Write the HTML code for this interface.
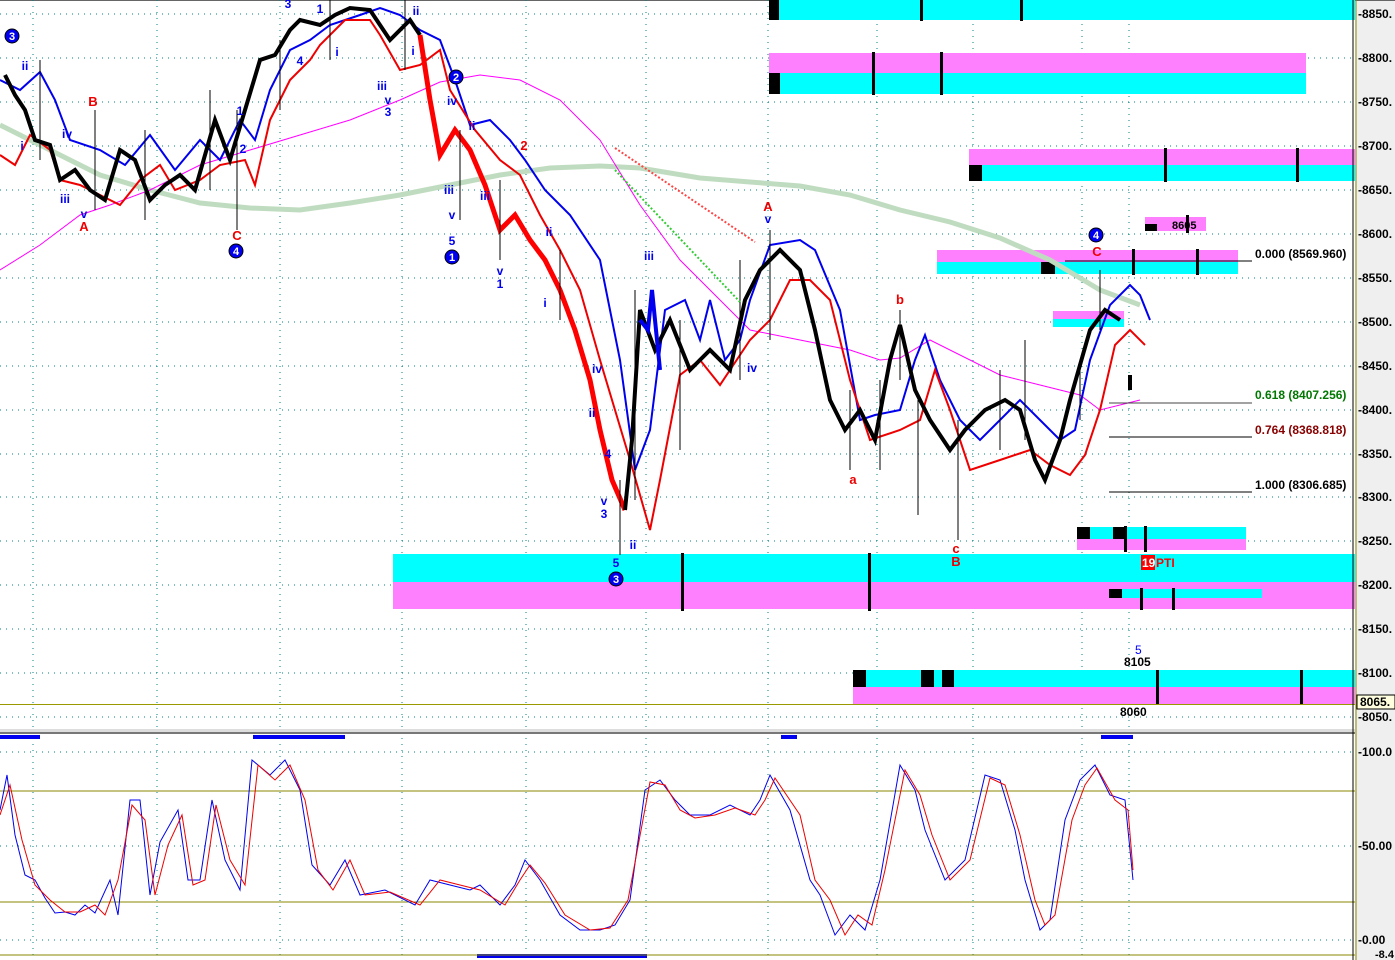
<!DOCTYPE html>
<html><head><meta charset="utf-8"><style>
html,body{margin:0;padding:0;background:#fff;width:1395px;height:960px;overflow:hidden}
svg{display:block;font-family:"Liberation Sans",sans-serif}
</style></head><body>
<svg width="1395" height="960" viewBox="0 0 1395 960" xmlns="http://www.w3.org/2000/svg">
<rect width="1395" height="960" fill="#fff"/>
<rect x="1355" y="0" width="40" height="960" fill="#efefef"/>
<line x1="0" y1="0.5" x2="1395" y2="0.5" stroke="#666"/>
<g stroke="#008080" stroke-width="1" stroke-dasharray="1 5">
<line x1="33" y1="0" x2="33" y2="960"/><line x1="157" y1="0" x2="157" y2="960"/><line x1="280" y1="0" x2="280" y2="960"/><line x1="402" y1="0" x2="402" y2="960"/><line x1="526" y1="0" x2="526" y2="960"/><line x1="646" y1="0" x2="646" y2="960"/><line x1="768" y1="0" x2="768" y2="960"/><line x1="877" y1="0" x2="877" y2="960"/><line x1="973" y1="0" x2="973" y2="960"/><line x1="1082" y1="0" x2="1082" y2="960"/><line x1="1129" y1="0" x2="1129" y2="960"/>
<line x1="0" y1="14" x2="1352" y2="14"/><line x1="0" y1="58" x2="1352" y2="58"/><line x1="0" y1="102" x2="1352" y2="102"/><line x1="0" y1="146" x2="1352" y2="146"/><line x1="0" y1="190" x2="1352" y2="190"/><line x1="0" y1="234" x2="1352" y2="234"/><line x1="0" y1="278" x2="1352" y2="278"/><line x1="0" y1="322" x2="1352" y2="322"/><line x1="0" y1="366" x2="1352" y2="366"/><line x1="0" y1="410" x2="1352" y2="410"/><line x1="0" y1="454" x2="1352" y2="454"/><line x1="0" y1="497" x2="1352" y2="497"/><line x1="0" y1="541" x2="1352" y2="541"/><line x1="0" y1="585" x2="1352" y2="585"/><line x1="0" y1="629" x2="1352" y2="629"/><line x1="0" y1="673" x2="1352" y2="673"/><line x1="0" y1="717" x2="1352" y2="717"/>
<line x1="0" y1="752" x2="1352" y2="752"/><line x1="0" y1="846" x2="1352" y2="846"/><line x1="0" y1="940" x2="1352" y2="940"/>
</g>
<rect x="769" y="0" width="586" height="20" fill="#00ffff"/><rect x="769" y="0" width="10" height="20" fill="#000"/>
<rect x="920" y="0" width="3" height="21" fill="#000"/><rect x="1020" y="0" width="3" height="21" fill="#000"/>
<rect x="769" y="53" width="537" height="20" fill="#ff80ff"/><rect x="769" y="73" width="537" height="21" fill="#00ffff"/><rect x="769" y="73" width="11" height="21" fill="#000"/>
<rect x="872" y="52" width="3" height="43" fill="#000"/><rect x="940" y="52" width="3" height="43" fill="#000"/>
<rect x="969" y="149" width="386" height="16" fill="#ff80ff"/><rect x="969" y="165" width="386" height="16" fill="#00ffff"/><rect x="969" y="165" width="13" height="16" fill="#000"/>
<rect x="1164" y="148" width="3" height="34" fill="#000"/><rect x="1296" y="148" width="3" height="34" fill="#000"/>
<rect x="1145" y="217" width="61" height="14" fill="#ff80ff"/><rect x="1145" y="224" width="12" height="7" fill="#000"/>
<rect x="1186" y="215" width="3" height="18" fill="#000"/>
<text x="1172" y="229" font-size="11" font-weight="bold" fill="#000">8605</text>
<rect x="937" y="250" width="301" height="12" fill="#ff80ff"/><rect x="937" y="262" width="301" height="12" fill="#00ffff"/><rect x="1041" y="262" width="14" height="12" fill="#000"/>
<rect x="1132" y="249" width="3" height="26" fill="#000"/><rect x="1196" y="249" width="3" height="26" fill="#000"/>
<rect x="1053" y="311" width="71" height="8" fill="#ff80ff"/><rect x="1053" y="319" width="71" height="8" fill="#00ffff"/>
<rect x="1077" y="527" width="169" height="12" fill="#00ffff"/><rect x="1077" y="539" width="169" height="11" fill="#ff80ff"/><rect x="1077" y="527" width="13" height="12" fill="#000"/><rect x="1113" y="527" width="14" height="12" fill="#000"/>
<rect x="393" y="554" width="962" height="28" fill="#00ffff"/><rect x="393" y="582" width="962" height="27" fill="#ff80ff"/>
<rect x="681" y="553" width="3" height="58" fill="#000"/><rect x="868" y="553" width="3" height="58" fill="#000"/>
<rect x="1109" y="589" width="153" height="9" fill="#00ffff"/><rect x="1109" y="589" width="13" height="9" fill="#000"/>
<rect x="1140" y="588" width="3" height="22" fill="#000"/><rect x="1172" y="588" width="3" height="22" fill="#000"/>
<rect x="1124" y="526" width="3" height="26" fill="#000"/><rect x="1144" y="526" width="3" height="26" fill="#000"/>
<rect x="1141" y="555" width="14" height="15" fill="#f00"/>
<text x="1142" y="567" font-size="12" font-weight="bold" fill="#fff">19</text><text x="1156" y="567" font-size="12" font-weight="bold" fill="#f00">PTI</text>
<rect x="853" y="670" width="502" height="17" fill="#00ffff"/><rect x="853" y="687" width="502" height="17" fill="#ff80ff"/>
<rect x="853" y="670" width="13" height="17" fill="#000"/><rect x="921" y="670" width="13" height="17" fill="#000"/><rect x="942" y="670" width="12" height="17" fill="#000"/>
<rect x="1156" y="670" width="3" height="35" fill="#000"/><rect x="1300" y="670" width="3" height="35" fill="#000"/>
<line x1="0" y1="704.5" x2="1355" y2="704.5" stroke="#999900"/>
<text x="1124" y="666" font-size="12" font-weight="bold">8105</text><text x="1135" y="654" font-size="12" fill="#00f">5</text>
<text x="1120" y="716" font-size="12" font-weight="bold">8060</text>
<polyline fill="none" stroke="#c0dcc0" stroke-width="5" points="0,125 50,150 100,175 150,190 200,203 250,208 300,210 350,203 400,195 450,185 500,175 550,168 600,166 640,168 700,178 750,182 800,186 850,195 900,210 950,222 1000,238 1050,260 1100,290 1140,305"/>
<polyline fill="none" stroke="#ff00ff" stroke-width="1" points="0,270 40,245 80,215 110,205 150,190 200,165 250,150 300,135 350,120 400,100 440,82 480,75 520,80 560,100 600,140 640,205 680,260 720,300 750,330 800,340 850,350 880,360 900,358 930,340 960,355 1000,375 1040,385 1080,395 1100,410 1140,400"/>
<polyline fill="none" stroke="#0000ee" stroke-width="2" points="0,80 20,90 40,72 55,100 70,140 100,150 125,165 150,135 175,170 200,140 220,160 240,120 255,140 270,90 290,50 310,40 330,25 360,15 380,8 400,15 420,30 440,40 455,80 470,125 490,120 510,140 525,160 545,190 570,215 600,260 620,360 635,470 650,430 665,310 685,300 700,340 710,300 725,360 740,340 750,300 770,245 800,240 815,250 840,310 860,420 875,415 900,410 915,360 925,335 940,380 960,420 980,440 1000,420 1020,400 1040,420 1060,440 1075,430 1090,360 1110,305 1130,285 1140,295 1150,320"/>
<polyline fill="none" stroke="#ee0000" stroke-width="2" points="0,155 15,165 30,135 50,150 60,180 80,185 100,195 120,205 140,180 160,165 175,190 200,180 220,165 245,160 255,185 270,120 290,80 310,60 320,45 345,20 370,20 380,35 400,70 420,65 440,50 450,90 475,130 500,160 520,175 540,215 560,250 580,290 600,360 630,460 650,530 660,480 680,375 700,360 720,385 750,340 770,320 790,280 810,280 830,300 850,380 870,440 900,430 920,420 935,370 950,410 970,470 1000,460 1030,450 1050,465 1070,475 1085,455 1100,410 1115,345 1130,330 1145,345"/>
<g stroke-width="1" stroke="#000" fill="none">
<polyline stroke-width="4" points="5,75 15,95 25,110 35,140 50,145 60,180 75,170 90,190 105,200 120,150 135,160 150,200 165,185 180,175 195,190 215,120 230,160 245,110 260,60 275,55 290,30 300,20 320,25 335,15 350,8 370,10 390,40 410,20 420,35"/>
<polyline stroke="#f00" stroke-width="5" points="420,35 430,100 440,155 455,130 470,150 485,185 500,230 515,215 530,240 545,260 560,290 575,330 590,380 600,430 612,480 625,510"/>
<polyline stroke-width="4" points="625,510 632,440 640,310 655,350 670,320 690,370 710,350 730,370 745,300 760,270 780,250 800,270 815,330 830,400 845,430 860,410 875,440 890,360 900,325 915,390 930,420 950,450 965,430 985,410 1005,400 1020,410 1035,460 1045,480 1060,440 1070,400 1090,330 1105,310 1120,320"/>
<polyline stroke="#00e" stroke-width="4" points="640,320 648,330 652,290 660,370"/>
<line x1="1130" y1="375" x2="1130" y2="390" stroke-width="4"/>
<path d="M40 60V160 M95 110V210 M145 130V220 M210 90V190 M237 110V230 M280 40V110 M330 0V60 M405 0V70 M460 130V220 M500 180V260 M560 250V320 M620 480V555 M635 290V500 M680 320V450 M740 260V380 M770 230V340 M850 390V470 M880 380V470 M900 310V380 M918 400V515 M958 420V540 M1000 370V450 M1025 340V440 M1080 360V420 M1100 270V330"/>
</g>
<line x1="615" y1="148" x2="755" y2="242" stroke="#f44" stroke-width="2" stroke-dasharray="2 2"/>
<line x1="615" y1="170" x2="740" y2="302" stroke="#3c3" stroke-width="2" stroke-dasharray="2 2"/>
<g stroke="#000" stroke-width="1"><line x1="1065" y1="261" x2="1252" y2="261"/><line x1="1109" y1="403" x2="1252" y2="403" stroke="#444"/><line x1="1109" y1="437" x2="1252" y2="437"/><line x1="1109" y1="492" x2="1252" y2="492"/></g>
<g font-size="12" font-weight="bold">
<text x="1255" y="258">0.000 (8569.960)</text>
<text x="1255" y="399" fill="#007700">0.618 (8407.256)</text>
<text x="1255" y="434" fill="#880000">0.764 (8368.818)</text>
<text x="1255" y="489">1.000 (8306.685)</text>
</g>
<g font-size="12" font-weight="bold" fill="#00e" text-anchor="middle">
<text x="25" y="70">ii</text><text x="22" y="150">i</text><text x="67" y="138">iv</text><text x="65" y="203">iii</text><text x="84" y="218">v</text>
<text x="288" y="8">3</text><text x="320" y="13">1</text><text x="300" y="65">4</text><text x="337" y="56">i</text><text x="240" y="115">1</text><text x="243" y="153">2</text>
<text x="382" y="90">iii</text><text x="388" y="104">v</text><text x="388" y="116">3</text><text x="416" y="15">ii</text><text x="413" y="55">i</text>
<text x="452" y="105">iv</text><text x="472" y="130">ii</text><text x="449" y="194">iii</text><text x="452" y="219">v</text><text x="452" y="245">5</text>
<text x="500" y="275">v</text><text x="500" y="288">1</text><text x="485" y="200">iii</text><text x="549" y="236">ii</text><text x="545" y="307">i</text>
<text x="649" y="260">iii</text><text x="597" y="373">iv</text><text x="592" y="417">ii</text><text x="608" y="458">4</text><text x="604" y="505">v</text><text x="604" y="518">3</text><text x="616" y="567">5</text><text x="633" y="549">ii</text>
<text x="768" y="223">v</text><text x="752" y="372">iv</text>
</g>
<g font-size="13" font-weight="bold" fill="#e00" text-anchor="middle">
<text x="93" y="106">B</text><text x="84" y="231">A</text><text x="237" y="240">C</text><text x="524" y="150">2</text><text x="768" y="211">A</text>
<text x="900" y="304">b</text><text x="853" y="484">a</text><text x="956" y="553">c</text><text x="956" y="566">B</text><text x="1097" y="256">C</text>
</g>
<g font-size="11" font-weight="bold" fill="#fff" text-anchor="middle">
<circle cx="12" cy="36" r="7" fill="#00e" stroke="#000"/><text x="12" y="40">3</text>
<circle cx="236" cy="251" r="7" fill="#00e" stroke="#000"/><text x="236" y="255">4</text>
<circle cx="456" cy="77" r="7" fill="#00e" stroke="#000"/><text x="456" y="81">2</text>
<circle cx="452" cy="257" r="7" fill="#00e" stroke="#000"/><text x="452" y="261">1</text>
<circle cx="616" cy="579" r="7" fill="#00e" stroke="#000"/><text x="616" y="583">3</text>
<circle cx="1096" cy="235" r="7" fill="#00e" stroke="#000"/><text x="1096" y="239">4</text>
</g>
<rect x="0" y="729" width="1355" height="4" fill="#ddd"/><line x1="0" y1="733" x2="1355" y2="733" stroke="#777" stroke-width="2"/>
<g fill="#00e"><rect x="0" y="735" width="40" height="4"/><rect x="253" y="735" width="92" height="4"/><rect x="781" y="735" width="16" height="4"/><rect x="1101" y="735" width="32" height="4"/><rect x="477" y="954" width="170" height="4"/></g>
<line x1="0" y1="791" x2="1355" y2="791" stroke="#888800"/><line x1="0" y1="902" x2="1355" y2="902" stroke="#888800"/><line x1="0" y1="955" x2="1355" y2="955" stroke="#888800"/>
<polyline fill="none" stroke="#00e" points="0,810 7,775 15,835 25,875 35,880 45,898 55,913 65,912 75,915 85,905 95,913 110,880 118,915 130,800 140,800 150,895 160,842 178,810 188,880 200,880 212,800 225,860 240,890 252,760 270,775 285,760 300,790 312,865 330,885 345,860 360,895 385,890 415,905 430,880 450,885 470,890 480,885 500,905 515,885 525,860 540,880 560,915 580,930 600,930 615,925 630,900 645,790 660,780 675,800 690,815 710,815 730,805 750,815 760,800 770,775 790,810 810,880 820,895 835,935 850,915 865,930 880,880 900,765 915,790 925,830 945,880 965,860 985,775 1000,780 1015,830 1025,880 1040,930 1050,920 1065,820 1080,780 1095,765 1110,795 1125,800 1133,880"/>
<polyline fill="none" stroke="#e00" points="0,815 10,785 22,840 35,885 50,900 65,912 80,912 95,905 105,915 118,880 132,805 145,820 155,895 168,845 182,815 193,885 205,880 216,805 230,860 245,885 258,765 275,780 290,765 305,800 318,870 333,890 350,860 365,895 390,892 420,905 440,880 460,885 480,890 505,905 520,880 530,865 545,883 565,915 590,930 610,928 628,900 650,782 665,785 680,810 695,818 715,815 735,808 755,815 765,800 775,778 800,815 815,880 830,900 845,935 858,915 872,925 885,870 905,770 920,795 932,835 950,880 970,860 990,778 1005,785 1020,835 1035,900 1045,925 1055,915 1072,820 1085,785 1097,768 1115,800 1128,810 1133,870"/>
<line x1="1353" y1="0" x2="1353" y2="960" stroke="#000"/><line x1="1356" y1="0" x2="1356" y2="960" stroke="#888800"/>
<g font-size="12" font-weight="bold" fill="#000">
<text x="1358" y="18">-8850.</text><text x="1358" y="62">-8800.</text><text x="1358" y="106">-8750.</text><text x="1358" y="150">-8700.</text><text x="1358" y="194">-8650.</text><text x="1358" y="238">-8600.</text><text x="1358" y="282">-8550.</text><text x="1358" y="326">-8500.</text><text x="1358" y="370">-8450.</text><text x="1358" y="414">-8400.</text><text x="1358" y="458">-8350.</text><text x="1358" y="501">-8300.</text><text x="1358" y="545">-8250.</text><text x="1358" y="589">-8200.</text><text x="1358" y="633">-8150.</text><text x="1358" y="677">-8100.</text><text x="1358" y="721">-8050.</text>
<text x="1358" y="756">-100.0</text><text x="1358" y="850">-50.00</text><text x="1358" y="944">-0.00</text><text x="1375" y="958" font-size="11">-8.4</text>
</g>
<rect x="1357" y="695" width="38" height="14" fill="#ffffe0" stroke="#000"/><text x="1360" y="706" font-size="12" font-weight="bold">8065.</text>
</svg>
</body></html>
